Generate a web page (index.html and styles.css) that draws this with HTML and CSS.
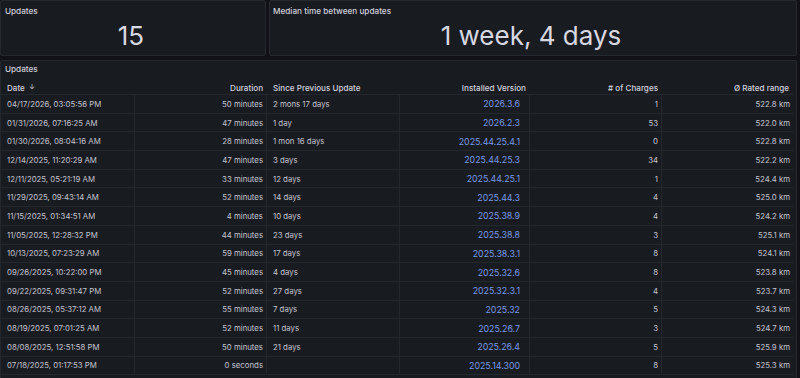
FILE: index.html
```html
<!DOCTYPE html>
<html>
<head>
<meta charset="utf-8">
<link rel="stylesheet" href="styles.css">
</head>
<body>
<div class="top">
  <div class="panel stat-a">
    <div class="title">Updates</div>
    <div class="stat">15</div>
  </div>
  <div class="panel stat-b">
    <div class="title">Median time between updates</div>
    <div class="stat">1 week, 4 days</div>
  </div>
</div>
<div class="panel tpanel">
  <div class="title">Updates</div>
  <div class="tbl">
    <div class="row head">
      <div class="c l">Date <span class="arrow">&#8595;</span></div>
      <div class="c r">Duration</div>
      <div class="c l">Since Previous Update</div>
      <div class="c r">Installed Version</div>
      <div class="c r"># of Charges</div>
      <div class="c r">Ø Rated range</div>
    </div>
    <div class="row"><div class="c l">04/17/2026, 03:05:56 PM</div><div class="c r">50 minutes</div><div class="c l">2 mons 17 days</div><div class="c r v"><a>2026.3.6</a></div><div class="c r">1</div><div class="c r">522.8 km</div></div>
    <div class="row"><div class="c l">01/31/2026, 07:16:25 AM</div><div class="c r">47 minutes</div><div class="c l">1 day</div><div class="c r v"><a>2026.2.3</a></div><div class="c r">53</div><div class="c r">522.0 km</div></div>
    <div class="row"><div class="c l">01/30/2026, 08:04:16 AM</div><div class="c r">28 minutes</div><div class="c l">1 mon 16 days</div><div class="c r v"><a>2025.44.25.4.1</a></div><div class="c r">0</div><div class="c r">522.8 km</div></div>
    <div class="row"><div class="c l">12/14/2025, 11:20:29 AM</div><div class="c r">47 minutes</div><div class="c l">3 days</div><div class="c r v"><a>2025.44.25.3</a></div><div class="c r">34</div><div class="c r">522.2 km</div></div>
    <div class="row"><div class="c l">12/11/2025, 05:21:19 AM</div><div class="c r">33 minutes</div><div class="c l">12 days</div><div class="c r v"><a>2025.44.25.1</a></div><div class="c r">1</div><div class="c r">524.4 km</div></div>
    <div class="row"><div class="c l">11/29/2025, 09:43:14 AM</div><div class="c r">52 minutes</div><div class="c l">14 days</div><div class="c r v"><a>2025.44.3</a></div><div class="c r">4</div><div class="c r">525.0 km</div></div>
    <div class="row"><div class="c l">11/15/2025, 01:34:51 AM</div><div class="c r">4 minutes</div><div class="c l">10 days</div><div class="c r v"><a>2025.38.9</a></div><div class="c r">4</div><div class="c r">524.2 km</div></div>
    <div class="row"><div class="c l">11/05/2025, 12:28:32 PM</div><div class="c r">44 minutes</div><div class="c l">23 days</div><div class="c r v"><a>2025.38.8</a></div><div class="c r">3</div><div class="c r">525.1 km</div></div>
    <div class="row"><div class="c l">10/13/2025, 07:23:29 AM</div><div class="c r">59 minutes</div><div class="c l">17 days</div><div class="c r v"><a>2025.38.3.1</a></div><div class="c r">8</div><div class="c r">524.1 km</div></div>
    <div class="row"><div class="c l">09/26/2025, 10:22:00 PM</div><div class="c r">45 minutes</div><div class="c l">4 days</div><div class="c r v"><a>2025.32.6</a></div><div class="c r">8</div><div class="c r">523.8 km</div></div>
    <div class="row"><div class="c l">09/22/2025, 09:31:47 PM</div><div class="c r">52 minutes</div><div class="c l">27 days</div><div class="c r v"><a>2025.32.3.1</a></div><div class="c r">4</div><div class="c r">523.7 km</div></div>
    <div class="row"><div class="c l">08/26/2025, 05:37:12 AM</div><div class="c r">55 minutes</div><div class="c l">7 days</div><div class="c r v"><a>2025.32</a></div><div class="c r">5</div><div class="c r">524.3 km</div></div>
    <div class="row"><div class="c l">08/19/2025, 07:01:25 AM</div><div class="c r">52 minutes</div><div class="c l">11 days</div><div class="c r v"><a>2025.26.7</a></div><div class="c r">3</div><div class="c r">524.7 km</div></div>
    <div class="row"><div class="c l">08/08/2025, 12:51:58 PM</div><div class="c r">50 minutes</div><div class="c l">21 days</div><div class="c r v"><a>2025.26.4</a></div><div class="c r">5</div><div class="c r">525.9 km</div></div>
    <div class="row"><div class="c l">07/18/2025, 01:17:53 PM</div><div class="c r">0 seconds</div><div class="c l"></div><div class="c r v"><a>2025.14.300</a></div><div class="c r">8</div><div class="c r">525.3 km</div></div>
  </div>
</div>
</body>
</html>
```
FILE: styles.css
```css
html, body {
  margin: 0;
  padding: 0;
  background: #111217;
  font-family: Inter, "Noto Sans", sans-serif;
  color: #c4c4d0;
  overflow: hidden;
  height: 378px;
}
.top {
  display: flex;
  gap: 3px;
  height: 56px;
  padding-right: 3px;
}
.panel {
  background: #181b1f;
  border: 1px solid #25282e;
  border-radius: 2px;
  box-sizing: border-box;
}
.stat-a {
  width: 266px;
  display: flex;
  flex-direction: column;
}
.stat-b {
  flex: 1;
  display: flex;
  flex-direction: column;
}
.title {
  font-size: 8.2px;
  font-weight: 500;
  color: #d0d0dc;
  padding: 5px 4px 0 4px;
  line-height: 10px;
  height: 10px;
}
.stat-b .title { padding-left: 3px; }
.stat {
  flex: 1;
  display: flex;
  align-items: center;
  justify-content: center;
  font-size: 26px;
  color: #d8d8e2;
  padding-bottom: 1px;
  padding-right: 4px;
}
.tpanel {
  margin-top: 4px;
  margin-right: 3px;
  height: 330px;
}
.tpanel .title {
  padding-top: 3px;
}
.tbl {
  margin-top: 4px;
}
.row {
  display: grid;
  grid-template-columns: 134px 132px 133px 130px 132px 1fr;
  height: 18.7px;
  border-bottom: 1px solid #24272d;
  box-sizing: border-box;
  font-size: 7.8px;
  margin-right: 3px;
}
.row.head {
  height: 17px;
  font-size: 8.1px;
  font-weight: 500;
  color: #d2d2de;
}
.head .c {
  padding-top: 3px;
}
.c {
  display: flex;
  align-items: center;
  padding: 0 5px 0 6px;
  white-space: nowrap;
  overflow: hidden;
}
.row:not(.head) .c:not(:last-child) {
  border-right: 1px solid #24272d;
}
.c.l { justify-content: flex-start; }
.c.r { justify-content: flex-end; }
.row:not(.head) .c.r { padding-right: 3px; }
.head .c.r { padding-right: 4px; }
.arrow {
  font-size: 7px;
  margin-left: 4px;
  color: #c0c0cc;
}
.v a {
  color: #7a9ae6;
  font-size: 8.8px;
  padding-right: 6px;
}
```
